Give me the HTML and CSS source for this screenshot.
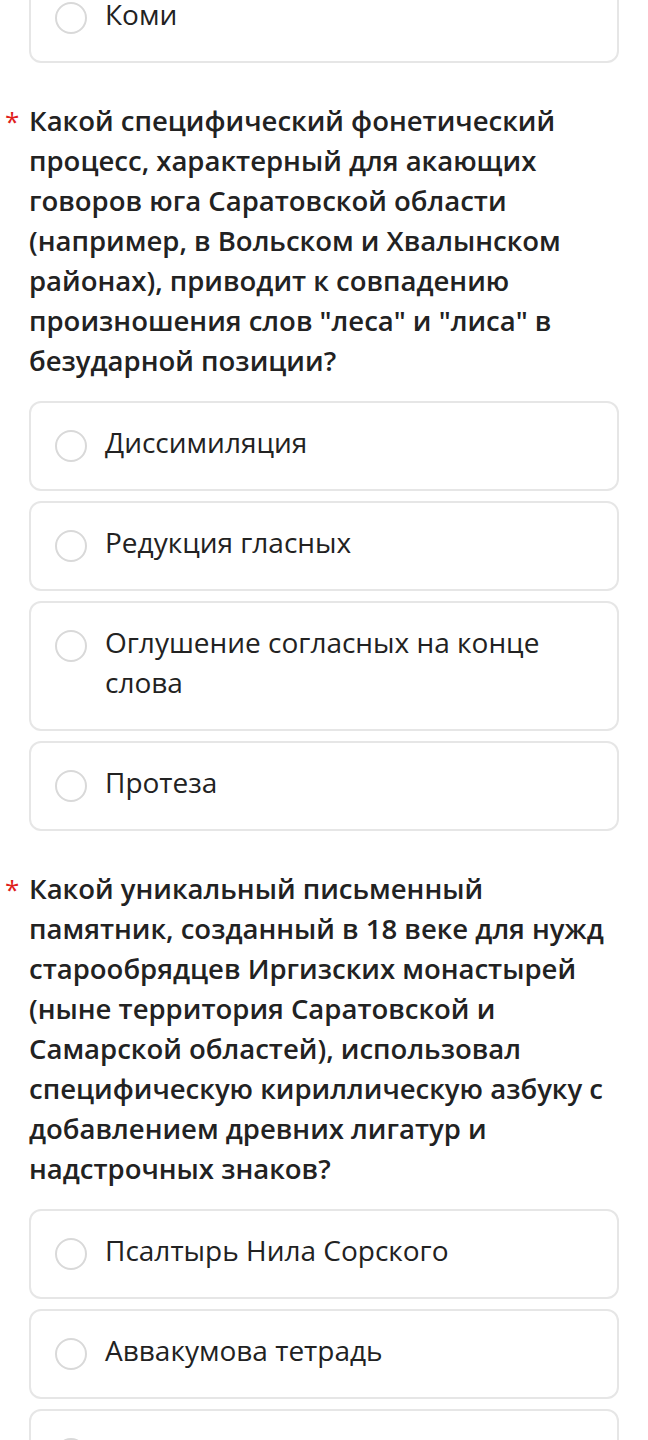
FILE: index.html
```html
<!DOCTYPE html>
<html>
<head>
  <title>Опрос</title>
  <link rel="stylesheet" href="styles.css">
</head>
<body>
  <div class="form">

    <div class="options">
      <label class="option"><span class="radio"></span><span class="option-text">Коми</span></label>
    </div>

    <div class="question">
      <div class="question-title">
        <span class="required">*</span>
        <span>Какой специфический фонетический процесс, характерный для акающих говоров юга Саратовской области (например, в Вольском и Хвалынском районах), приводит к совпадению произношения слов "леса" и "лиса" в безударной позиции?</span>
      </div>
      <div class="options">
        <label class="option"><span class="radio"></span><span class="option-text">Диссимиляция</span></label>
        <label class="option"><span class="radio"></span><span class="option-text">Редукция гласных</span></label>
        <label class="option"><span class="radio"></span><span class="option-text">Оглушение согласных на конце слова</span></label>
        <label class="option"><span class="radio"></span><span class="option-text">Протеза</span></label>
      </div>
    </div>

    <div class="question">
      <div class="question-title">
        <span class="required">*</span>
        <span>Какой уникальный письменный памятник, созданный в 18 веке для нужд старообрядцев Иргизских монастырей (ныне территория Саратовской и Самарской областей), использовал специфическую кириллическую азбуку с добавлением древних лигатур и надстрочных знаков?</span>
      </div>
      <div class="options">
        <label class="option"><span class="radio"></span><span class="option-text">Псалтырь Нила Сорского</span></label>
        <label class="option"><span class="radio"></span><span class="option-text">Аввакумова тетрадь</span></label>
        <label class="option"><span class="radio"></span><span class="option-text">Иргизский синодик</span></label>
      </div>
    </div>

  </div>
</body>
</html>
```

FILE: styles.css
```css
body {
  margin: 0;
  background-color: #fff;
  color: #222;
  font-family: "Open Sans", "Noto Sans", sans-serif;
}

.form {
  margin-top: -27px;
  padding: 0 29px;
}

.options {
  display: flex;
  flex-direction: column;
  gap: 10px;
}

.option {
  display: flex;
  align-items: flex-start;
  gap: 18px;
  padding: 19px 24px 27px;
  border: 2px solid #e6e6e6;
  border-radius: 12px;
  font-size: 28px;
  line-height: 40px;
  cursor: pointer;
}

.radio {
  flex: none;
  width: 28px;
  height: 28px;
  margin-top: 8px;
  border: 2px solid #d9d9d9;
  border-radius: 50%;
}

.question {
  margin-top: 38px;
}

.question-title {
  display: flex;
  margin-left: -24px;
  margin-bottom: 20px;
  font-size: 27.5px;
  font-weight: 600;
  line-height: 40px;
}

.required {
  flex: none;
  width: 24px;
  color: #e0201b;
  font-size: 26px;
  font-weight: normal;
}
```
